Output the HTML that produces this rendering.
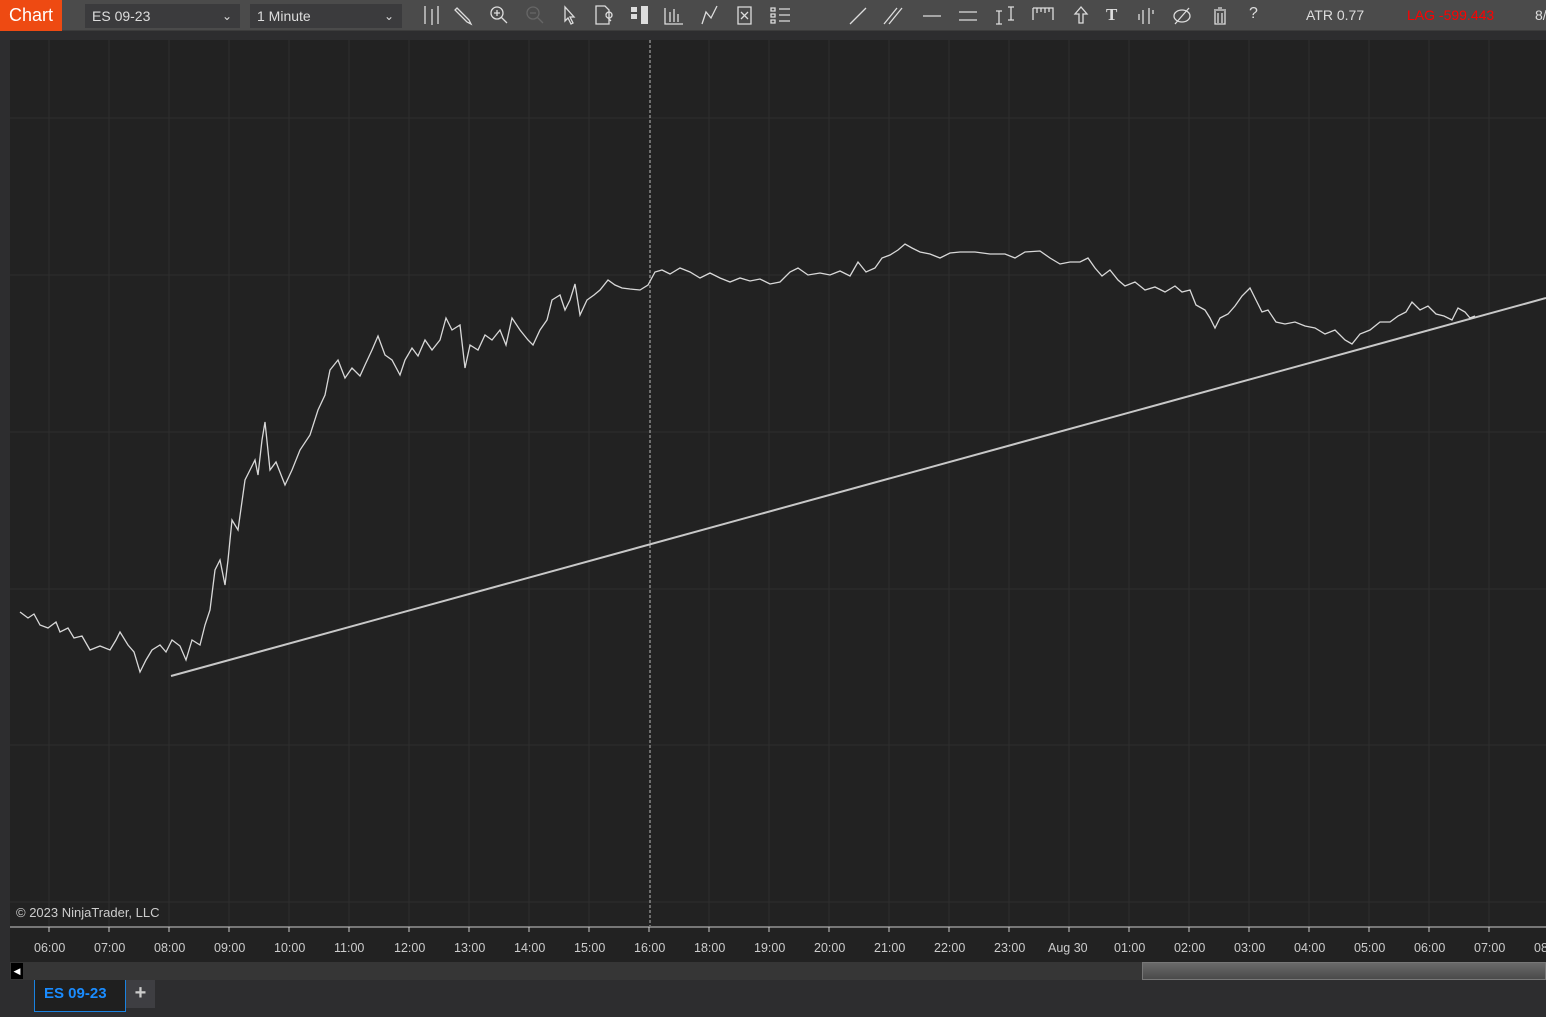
<!DOCTYPE html>
<html><head><meta charset="utf-8"><style>
*{margin:0;padding:0;box-sizing:border-box}
body{width:1546px;height:1017px;background:#2d2d2f;font-family:"Liberation Sans",sans-serif;overflow:hidden;position:relative}
.tb{position:absolute;left:0;top:0;width:1546px;height:31px;background:#4b4b4b;border-bottom:1px solid #3c3c3c}
.chart{position:absolute;left:0;top:0;background:#ee4a12;color:#fff;width:62px;height:31px;font-size:18px;line-height:31px;padding-left:9px}
.dd{position:absolute;top:4px;height:24px;background:#3b3b3d;color:#ddd;font-size:14px;line-height:24px;padding-left:7px}
.dd span{position:absolute;right:8px;top:0;font-size:12px}
.ic{position:absolute;top:5px;color:#ddd;font-size:16px}
</style></head><body>
<div class="tb">
<div class="chart">Chart</div>
<div class="dd" style="left:85px;width:155px">ES 09-23<span>&#8964;</span></div>
<div class="dd" style="left:250px;width:152px">1 Minute<span>&#8964;</span></div>
<svg width="1546" height="31" style="position:absolute;left:0;top:0" stroke="#ddd" fill="none" stroke-width="1.3">
<path d="M425 6v18M432 9v16M438 6v18"/>
<path d="M457 8l12 12 2 4-4-2-12-12z"/>
<circle cx="497" cy="13" r="6"/><path d="M501 17l6 6M494 13h6M497 10v6"/>
<g stroke="#666"><circle cx="533" cy="13" r="6"/><path d="M537 17l6 6M530 13h6"/></g>
<path d="M565 7v14l3-3 3 6 2-1-3-6h4z"/>
<path d="M596 6h9l4 4v14h-13z M606 15a3 3 0 1 1 0 .1M608 18l3 3"/>
<path d="M631 7h6v5h-6zM631 14h6v5h-6zM641 6h7v18h-7z" fill="#ddd" stroke="none"/>
<path d="M665 8v16h18M670 12v10M674 9v13M678 14v8"/>
<path d="M702 24l4-12 5 6 6-12"/>
<path d="M738 7h13v17h-13zM741 12l7 7M748 12l-7 7"/>
<path d="M771 8h4v3h-4zM771 14h4v3h-4zM771 20h4v3h-4zM779 9h11M779 15h11M779 21h11"/>
<path d="M850 24l16-16M884 24l13-16M889 24l13-16M923 16h18M959 12h18M959 20h18M999 11v13M996 11h6M996 24h6M1011 7v13M1008 7h6M1008 20h6"/>
<path d="M1033 8h20v12M1033 8v12M1037 8v5M1041 8v4M1045 8v5M1049 8v4"/>
<path d="M1081 7l-6 7h4v9h4v-9h4z"/>
<path d="M1143 10v14M1149 8v16M1139 14v6M1153 10v4"/>
<ellipse cx="1182" cy="16" rx="8" ry="6"/><path d="M1175 24l14-16"/>
<path d="M1214 10h12M1218 8h4M1215 11v13h10v-13M1218 13v10M1222 13v10"/>
</svg>
<div class="ic" style="left:1106px;font-family:'Liberation Serif';font-weight:bold;font-size:17px">T</div>
<div class="ic" style="left:1249px">?</div>
<div class="ic" style="left:1306px;font-size:14px;top:7px">ATR 0.77</div>
<div class="ic" style="left:1407px;font-size:14px;top:7px;color:#f00">LAG -599.443</div>
<div class="ic" style="left:1535px;font-size:14px;top:7px">8/</div>
</div>
<div style="position:absolute;left:10px;top:40px;width:1536px;height:922px;background:#222"></div>
<svg width="1546" height="1017" style="position:absolute;left:0;top:0">
<g stroke="#2e2e2e" stroke-width="1">
<path d="M10 118H1546M10 275H1546M10 432H1546M10 589H1546M10 745H1546M10 902H1546"/>
<path d="M49 40V926M109 40V926M169 40V926M229 40V926M289 40V926M349 40V926M409 40V926M469 40V926M529 40V926M589 40V926M709 40V926M769 40V926M829 40V926M889 40V926M949 40V926M1009 40V926M1069 40V926M1129 40V926M1189 40V926M1249 40V926M1309 40V926M1369 40V926M1429 40V926M1489 40V926"/>
</g>
<path d="M650 40V926" stroke="#bbb" stroke-dasharray="3,2"/>
<path d="M10 927H1546" stroke="#ccc"/>
<g stroke="#ccc"><path d="M49 927v5M109 927v5M169 927v5M229 927v5M289 927v5M349 927v5M409 927v5M469 927v5M529 927v5M589 927v5M649 927v5M709 927v5M769 927v5M829 927v5M889 927v5M949 927v5M1009 927v5M1069 927v5M1129 927v5M1189 927v5M1249 927v5M1309 927v5M1369 927v5M1429 927v5M1489 927v5"/></g>
<path d="M171 676L1546 298" stroke="#c8c8c8" stroke-width="2"/>
<polyline fill="none" stroke="#d8d8d8" stroke-width="1.3" points="20,612 28,618 34,614 40,625 48,628 56,622 60,632 68,628 74,638 82,636 90,650 100,646 110,650 116,640 120,632 128,645 134,652 140,672 146,660 152,650 160,645 166,652 172,640 180,646 186,660 192,640 200,645 205,625 210,610 215,570 220,560 225,585 228,560 232,520 238,530 245,480 250,470 255,460 258,475 262,440 265,422 270,470 276,462 285,485 292,470 300,450 310,435 318,410 325,395 330,370 338,360 345,378 352,368 360,376 365,365 372,350 378,336 385,355 392,360 400,375 405,360 412,348 418,356 425,340 432,350 440,340 446,318 452,330 460,325 465,368 470,345 478,350 485,335 492,340 500,330 506,345 512,318 520,330 528,340 533,345 540,330 547,320 552,300 560,295 565,310 570,300 575,284 580,315 587,300 594,295 600,290 608,280 615,285 622,288 630,289 640,290 648,285 655,272 662,270 670,274 680,268 690,272 700,278 710,273 720,278 730,282 740,278 750,281 760,279 770,284 780,282 790,272 798,268 808,275 820,273 830,275 840,271 850,276 858,262 866,272 875,268 882,258 890,255 898,250 905,244 912,248 920,252 930,254 940,258 950,253 960,252 975,252 990,254 1005,254 1015,258 1025,252 1040,251 1050,258 1060,264 1070,262 1080,262 1088,258 1095,268 1102,276 1110,270 1118,280 1125,286 1135,282 1145,290 1155,287 1165,292 1175,286 1182,292 1190,290 1196,305 1205,310 1210,318 1215,328 1220,318 1228,314 1235,306 1242,296 1250,288 1256,300 1262,312 1268,310 1276,322 1285,324 1295,322 1305,326 1315,328 1325,334 1335,330 1345,340 1352,344 1360,334 1370,330 1380,322 1390,322 1398,316 1406,312 1412,302 1420,310 1428,306 1436,314 1444,316 1452,320 1458,308 1465,312 1470,318 1475,316"/>
</svg>
<div style="position:absolute;left:16px;top:905px;color:#ccc;font-size:13px">© 2023 NinjaTrader, LLC</div>
<div style="position:absolute;left:0;top:941px;width:1546px;color:#ccc;font-size:12.5px">
<span style="position:absolute;left:34px">06:00</span><span style="position:absolute;left:94px">07:00</span><span style="position:absolute;left:154px">08:00</span><span style="position:absolute;left:214px">09:00</span><span style="position:absolute;left:274px">10:00</span><span style="position:absolute;left:334px">11:00</span><span style="position:absolute;left:394px">12:00</span><span style="position:absolute;left:454px">13:00</span><span style="position:absolute;left:514px">14:00</span><span style="position:absolute;left:574px">15:00</span><span style="position:absolute;left:634px">16:00</span><span style="position:absolute;left:694px">18:00</span><span style="position:absolute;left:754px">19:00</span><span style="position:absolute;left:814px">20:00</span><span style="position:absolute;left:874px">21:00</span><span style="position:absolute;left:934px">22:00</span><span style="position:absolute;left:994px">23:00</span><span style="position:absolute;left:1048px">Aug 30</span><span style="position:absolute;left:1114px">01:00</span><span style="position:absolute;left:1174px">02:00</span><span style="position:absolute;left:1234px">03:00</span><span style="position:absolute;left:1294px">04:00</span><span style="position:absolute;left:1354px">05:00</span><span style="position:absolute;left:1414px">06:00</span><span style="position:absolute;left:1474px">07:00</span><span style="position:absolute;left:1534px">08</span>
</div>
<div style="position:absolute;left:10px;top:962px;width:1536px;height:18px;background:#363636"></div>
<div style="position:absolute;left:11px;top:963px;width:12px;height:16px;background:#000;color:#fff;font-size:9px;line-height:16px;text-align:center">&#9664;</div>
<div style="position:absolute;left:1142px;top:962px;width:404px;height:18px;background:linear-gradient(#6a6a6a,#4a4a4a);border:1px solid #777"></div>
<div style="position:absolute;left:34px;top:980px;width:92px;height:32px;background:#1f1f1f;border:1px solid #1a82e0;border-top:none;color:#1a8cff;font-weight:bold;font-size:15px;line-height:28px;padding-left:9px">ES 09-23</div>
<div style="position:absolute;left:126px;top:980px;width:29px;height:28px;background:#3e3e42;color:#ccc;font-size:20px;line-height:27px;text-align:center;font-weight:bold">+</div>
</body></html>
